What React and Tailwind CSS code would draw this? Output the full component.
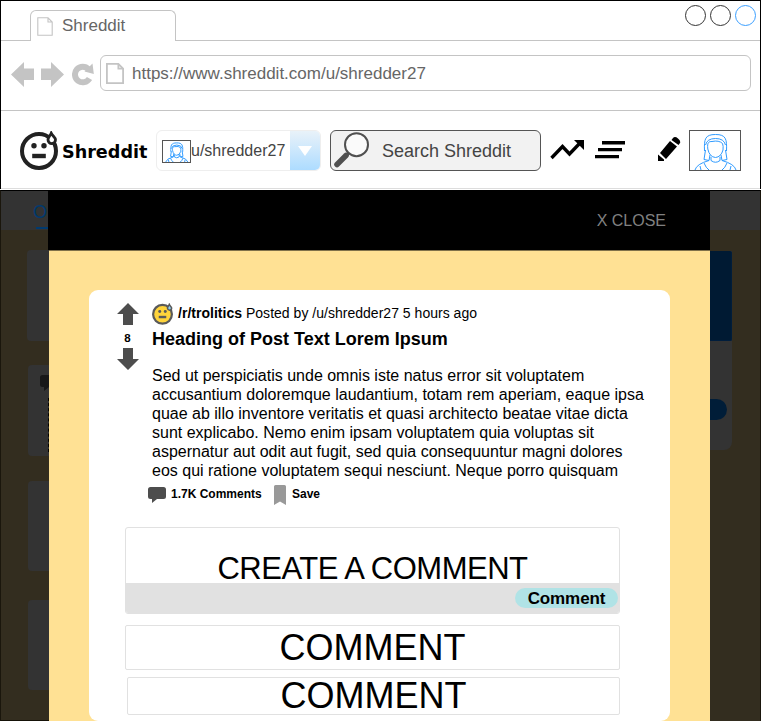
import React from "react";

const POST_LINES = [
  "Sed ut perspiciatis unde omnis iste natus error sit voluptatem",
  "accusantium doloremque laudantium, totam rem aperiam, eaque ipsa",
  "quae ab illo inventore veritatis et quasi architecto beatae vitae dicta",
  "sunt explicabo. Nemo enim ipsam voluptatem quia voluptas sit",
  "aspernatur aut odit aut fugit, sed quia consequuntur magni dolores",
  "eos qui ratione voluptatem sequi nesciunt. Neque porro quisquam",
];

function PageIcon({ className, weight }) {
  return (
    <svg className={className} viewBox="0 0 16 19" preserveAspectRatio="none" fill="none" stroke="#c4c4c4" strokeWidth={weight}>
      <path d="M.8 .8H11L15.2 5V18.2H.8ZM11 .8V5H15.2" />
    </svg>
  );
}

function SweatFace({ className, face, line }) {
  return (
    <svg className={className} viewBox="0 0 38 39">
      <circle cx="19" cy="20" r="17" fill={face} stroke={line} strokeWidth="4" />
      <circle cx="14" cy="14.800" r="2.700" fill={line} />
      <circle cx="24" cy="14.800" r="2.700" fill={line} />
      <rect x="12.200" y="22.800" width="13.600" height="4.400" fill={line} />
      <path d="M31.200 2.200C30 5 28 6.500 28 8.800A3.700 3.700 0 0 0 35.500 8.800C35.500 6.500 32.500 5 31.200 2.200Z" fill={face === "none" ? "#fff" : "#8fd0f5"} stroke={line} strokeWidth="2.800" />
    </svg>
  );
}

function Avatar({ className, weight }) {
  return (
    <svg className={className} viewBox="0 0 50 39" preserveAspectRatio="none" fill="none" stroke="#2f9bff" strokeWidth={weight}>
      <path d="M14.500 20C14 8 15 3.500 25.500 3.500S37 8 36.500 20" />
      <path d="M17.800 18C17 11 19 10.500 22 10.500Q29 9 32.500 12.500Q33.500 15 33 19Q31 26 25.500 26.500Q19.500 26 17.800 18Z" />
      <path d="M15.500 14Q17 7.500 25.500 7.500T35.500 14M15.500 19L14 28.500L19 29.500L20 24M35.500 19L37 28.500L32 29.500L31 24M21 26V29.500Q25.500 33 30 29.500V26" />
      <path d="M5 39Q6.500 33 19 29.500M46 39Q44.500 33 32 29.500M11 39L10 35M40 39L41 35M14 32Q16 37 19 39M37 32Q35 37 32 39" />
    </svg>
  );
}

function Arrow({ className }) {
  return (
    <svg className={className} viewBox="0 0 22 22" preserveAspectRatio="none" fill="currentColor">
      <path d="M11 0L22 11H16V22H6V11H0Z" />
    </svg>
  );
}

function Bubble({ className }) {
  return (
    <svg className={className} viewBox="0 0 18 16" fill="currentColor">
      <path d="M2.500 0H15.500Q18 0 18 2.500V9.500Q18 12 15.500 12H9L4 16V12H2.500Q0 12 0 9.500V2.500Q0 0 2.500 0Z" />
    </svg>
  );
}

function BrowserChrome() {
  return (
    <>
      <div className="flex h-[41px] shrink-0 items-end border-t border-black">
        <div className="h-full w-[29px] border-b border-[#c4c4c4]" />
        <div className="flex h-[31px] w-[146px] items-center rounded-t-[6px] border border-b-0 border-[#c4c4c4] pl-[6px]">
          <PageIcon className="h-[19px] w-4" weight="1.1" />
          <span className="ml-[9px] text-[17px] leading-6 text-[#666]">Shreddit</span>
        </div>
        <div className="flex h-full flex-1 justify-end gap-1 border-b border-[#c4c4c4] pr-1 pt-1">
          <div className="size-[21px] rounded-full border border-[#333]" />
          <div className="size-[21px] rounded-full border border-[#333]" />
          <div className="size-[21px] rounded-full border border-[#3b9fff]" />
        </div>
      </div>
      <div className="flex h-[70px] shrink-0 border-b border-[#c4c4c4] pl-[10px] pr-[9px] pt-[14px]">
        <div className="flex w-[89px] items-start pt-[7px]">
          <svg className="h-[25px] w-[23px]" viewBox="0 0 23 25" fill="#c4c4c4"><path d="M0 12.500L13 0V6.500H23V18H13V25Z" /></svg>
          <svg className="ml-[7px] h-[25px] w-[23px]" viewBox="0 0 23 25" fill="#c4c4c4"><path d="M23 12.500L10 0V6.500H0V18H10V25Z" /></svg>
          <svg className="ml-2 mt-[1px] h-[24px] w-[22px]" viewBox="0 0 22 24">
            <path d="M17.500 15.500A7.800 7.800 0 1 1 16.500 6.200" fill="none" stroke="#c4c4c4" strokeWidth="6" />
            <path d="M20.500 .5L21.800 11L12.500 8.500Z" fill="#c4c4c4" />
          </svg>
        </div>
        <div className="flex h-9 flex-1 items-center rounded-[6px] border border-[#c4c4c4] pl-[5px]">
          <PageIcon className="h-[21px] w-[18px]" weight="1.6" />
          <span className="ml-2 mt-[2px] text-[17px] leading-6 text-[#666]">https://www.shreddit.com/u/shredder27</span>
        </div>
      </div>
    </>
  );
}

function SiteBar() {
  return (
    <div className="flex h-[78px] shrink-0 items-start border-b border-[#ddd] pl-[19px] pt-[19px]">
      <SweatFace className="mt-px h-[39px] w-[38px] shrink-0" face="none" line="#222" />
      <span className="ml-1 mt-2 w-[94px] font-['DejaVu_Sans',sans-serif] text-[17.6px] font-bold leading-[28px] text-black">Shreddit</span>
      <div className="flex h-[41px] w-[165px] shrink-0 overflow-hidden rounded-[6px] border border-[#eee]">
        <Avatar className="ml-[5px] mt-[9px] h-[23px] w-[29px] shrink-0 border border-[#555]" weight="1.8" />
        <span className="w-[99px] whitespace-nowrap text-base leading-[39px] text-[#444]">u/shredder27</span>
        <div className="flex flex-1 items-center justify-center bg-linear-to-b from-[#e9f2f9] to-[#addcff]">
          <svg className="h-[10px] w-[14px]" viewBox="0 0 14 10"><path d="M0 0H14L7 10Z" fill="#fff" /></svg>
        </div>
      </div>
      <div className="ml-[9px] flex h-[41px] w-[211px] shrink-0 rounded-[6px] border border-[#555] bg-[#f2f2f2]">
        <svg className="ml-[3px] mt-px h-[36px] w-[36px]" viewBox="0 0 36 36" fill="none" stroke="#505050">
          <circle cx="22.500" cy="12.700" r="11.500" strokeWidth="2" fill="#fafafa" />
          <path d="M14.500 21L11 25" strokeWidth="3" />
          <path d="M12 23.500L3 32.500" strokeWidth="5.500" strokeLinecap="round" />
        </svg>
        <span className="ml-[12px] whitespace-nowrap text-[18px] leading-[40px] text-[#444]">Search Shreddit</span>
      </div>
      <svg className="ml-[9px] mt-[9px] h-[21px] w-[35px] shrink-0" viewBox="0 0 35 21">
        <path d="M1.500 19L12.500 7.500L19.500 15L30 4" fill="none" stroke="#000" strokeWidth="3.300" />
        <path d="M24 1H34V11Z" fill="#000" />
      </svg>
      <svg className="ml-[10px] mt-[10px] h-[20px] w-[30px] shrink-0" viewBox="0 0 30 20" fill="#000">
        <path d="M7 1H30V4.500H7ZM3 8H27V11.300H3ZM0 15H24V18.300H0Z" />
      </svg>
      <svg className="ml-[33px] mt-[7px] h-[24px] w-[23px] shrink-0" viewBox="0 0 23 24" fill="#000">
        <path d="M0 24V17.500L6 22.500V24ZM2 16L12 4L19 9.500L8 22ZM13.500 3L15 1Q17-1 20 1.500Q23 4 22 6L20.500 8Z" />
      </svg>
      <Avatar className="ml-[8px] h-[41px] w-[52px] shrink-0 border border-[#555]" weight="1" />
    </div>
  );
}

function LeftBackdrop() {
  return (
    <div className="flex w-[49px] shrink-0 flex-col overflow-hidden border-b border-l border-t border-b-[#151208] border-l-[#1a160c] border-t-black bg-[#332d1f]">
      <div className="flex h-[39px] shrink-0 flex-col items-end overflow-hidden border-r border-black bg-[#333]">
        <span className="mt-[10px] w-[15px] text-[18px] leading-[22px] text-[#003a70]">O</span>
        <div className="mt-[4px] h-[2px] w-3 shrink-0 bg-[#003a70]" />
      </div>
      <div className="ml-[26px] mt-[20px] h-[91px] shrink-0 rounded-l bg-[#333]" />
      <div className="ml-[27px] mt-[24px] flex h-[91px] shrink-0 flex-col items-end overflow-hidden rounded-l-[4px] bg-[#333]">
        <div className="mt-[10px] w-[9px] overflow-hidden text-[#181818]"><Bubble className="h-4 w-[18px] max-w-none" /></div>
        <div className="mt-[7px] h-[54px] w-px border-l border-dashed border-black" />
      </div>
      <div className="ml-[27px] mt-[25px] h-[90px] shrink-0 rounded-l-[4px] bg-[#333]" />
      <div className="ml-[27px] mt-[29px] h-[90px] shrink-0 rounded-l-[4px] bg-[#333]" />
    </div>
  );
}

function RightBackdrop() {
  return (
    <div className="flex w-[51px] shrink-0 flex-col overflow-hidden border-r border-t border-r-[#1a160c] border-t-black bg-[#332d1f]">
      <div className="h-[39px] shrink-0 bg-[#333]" />
      <div className="mr-[28px] mt-[21px] flex h-[199px] flex-col rounded-br-[8px] bg-[#333]">
        <div className="h-[90px] rounded-r-[2px] border-b border-r border-[#001d3c] bg-[#001a33]" />
        <div className="mr-[5px] mt-[58px] h-[21px] rounded-r-full bg-[#001d38]" />
      </div>
    </div>
  );
}

function Post() {
  return (
    <div className="flex">
      <div className="ml-[27px] flex w-[23px] shrink-0 flex-col items-center text-[#4d4d4d]">
        <Arrow className="mt-[13px] h-[22px] w-[22px]" />
        <span className="mt-[5px] text-[11.5px] font-bold leading-[16px] text-black">8</span>
        <Arrow className="mt-[2px] h-[22px] w-[22px] rotate-180" />
      </div>
      <div className="ml-[13px] flex-1 whitespace-nowrap text-black">
        <div className="flex h-[24px] items-end pt-[13px]">
          <SweatFace className="-mb-[11px] h-[22px] w-[21px] shrink-0" face="#ffd43b" line="#5a5a5a" />
          <p className="-mb-[7px] ml-[5px] text-[14px] leading-4 tracking-[0.02px]"><b>/r/trolitics</b> Posted by /u/shredder27 5 hours ago</p>
        </div>
        <h1 className="mt-[14px] text-[18px] font-bold leading-[22px]">Heading of Post Text Lorem Ipsum</h1>
        <div className="mt-[16px] text-[16px] leading-[19px]">
          {POST_LINES.map((l) => <p key={l}>{l}</p>)}
        </div>
        <div className="-ml-1 mt-[5px] flex items-start text-[12px] font-bold leading-[19px]">
          <Bubble className="mt-[2px] h-4 w-[18px] text-[#4d4d4d]" />
          <span className="ml-[5px] w-[103px]">1.7K Comments</span>
          <svg className="h-5 w-3" viewBox="0 0 12 20" fill="#999"><path d="M0 1.500Q0 0 1.500 0H10.500Q12 0 12 1.500V20L6 16.500L0 20Z" /></svg>
          <span className="ml-[6px]">Save</span>
        </div>
      </div>
    </div>
  );
}

function Modal() {
  return (
    <div className="flex w-[661px] shrink-0 flex-col bg-[#ffe194]">
      <div className="-ml-px flex h-[60px] shrink-0 justify-end bg-black pr-[44px] pt-[21px] text-[16px] leading-[20px] text-[#808080]">X CLOSE</div>
      <div className="h-px shrink-0 bg-[#80714a]" />
      <div className="ml-10 mt-[39px] h-[431px] w-[581px] shrink-0 rounded-[9px] bg-white">
        <Post />
        <div className="ml-[36px] mt-[22px] flex h-[87px] w-[495px] flex-col rounded-[3px] border border-[#e1e1e1] text-black">
          <div className="flex h-[55px] items-end justify-center">
            <span className="-mb-[4px] text-[31px] leading-[36px] tracking-[-0.5px]">CREATE A COMMENT</span>
          </div>
          <div className="flex h-[30px] shrink-0 justify-end rounded-b-[2px] bg-[#e1e1e1] pr-px pt-[5px]">
            <button className="h-5 w-[103px] rounded-full bg-[#b0e3e6] text-[17px] font-bold leading-[21px] tracking-[-0.1px]">Comment</button>
          </div>
        </div>
        <div className="ml-[36px] mt-[11px] flex h-[45px] w-[495px] justify-center rounded-[2px] border border-[#e1e1e1] text-[36px] leading-[43px] text-black">COMMENT</div>
        <div className="ml-[38px] mt-[7px] flex h-[38px] w-[493px] justify-center rounded-[2px] border border-[#e1e1e1] text-[36px] leading-[36px] text-black">COMMENT</div>
      </div>
    </div>
  );
}

export default function App() {
  return (
    <div className="flex h-[721px] w-[761px] flex-col overflow-hidden bg-white font-['Liberation_Sans',Arial,sans-serif]">
      <div className="flex h-[189px] shrink-0 flex-col border-x border-black">
        <BrowserChrome />
        <SiteBar />
      </div>
      <div className="mt-px flex h-[531px] shrink-0">
        <LeftBackdrop />
        <Modal />
        <RightBackdrop />
      </div>
    </div>
  );
}
